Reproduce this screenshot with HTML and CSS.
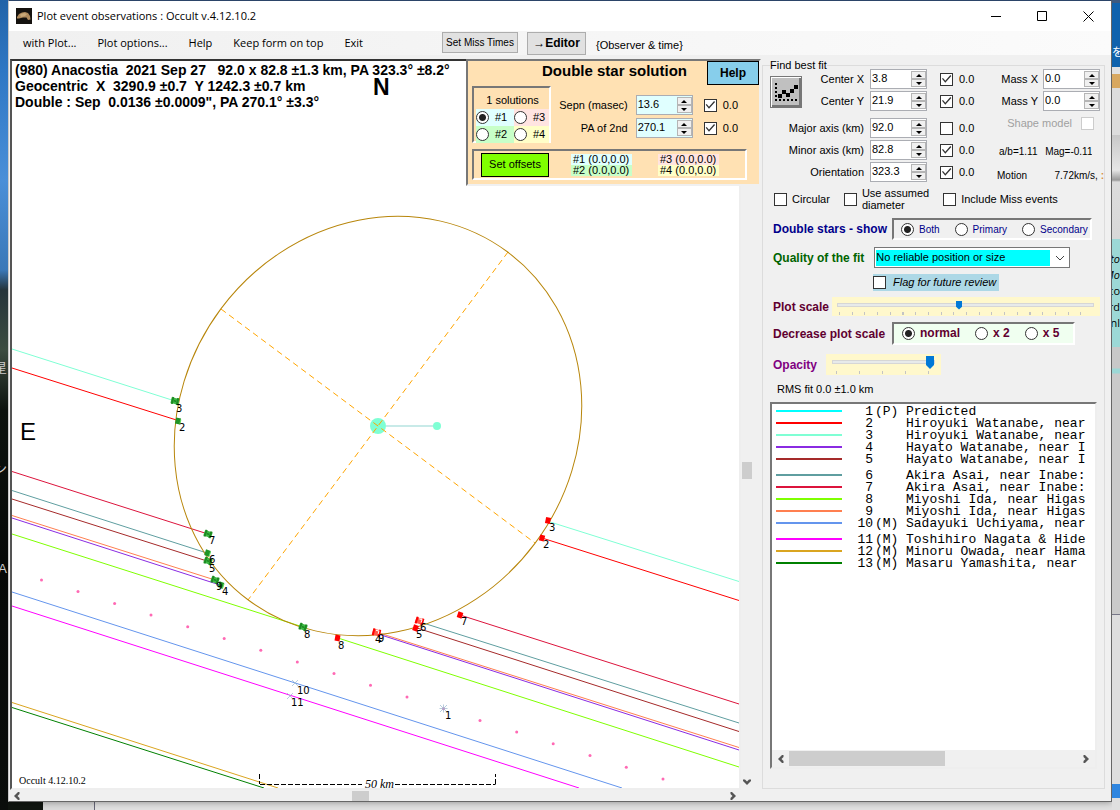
FILE: index.html
```html
<!DOCTYPE html>
<html lang="en">
<head>
<meta charset="utf-8">
<title>Plot event observations : Occult v.4.12.10.2</title>
<link rel="stylesheet" href="styles.css">
</head>
<body>
<div class="desk-left"><span class="desk-star">星</span><span class="desk-n">ン</span><span class="desk-ha">HA</span></div>
<div class="window">
  <header class="titlebar">
    <svg class="app-icon" viewBox="0 0 16 16"><rect width="16" height="16" fill="#15120f"/><path d="M1 9L3 6 6 4.500 9 4 12 5 14 8 14.500 11.500 12 12 10.500 9.500 7 9.500 3 10.500 1 10.500z" fill="#b08a5c"/><path d="M4 6.500l4-1.500 3 1-2 2-4 1z" fill="#c9a878"/></svg>
    <h1>Plot event observations : Occult v.4.12.10.2</h1>
    <div class="caption">
      <button aria-label="Minimize"><svg viewBox="0 0 11 11"><path d="M0 5.500h10"/></svg></button>
      <button aria-label="Maximize"><svg viewBox="0 0 11 11"><path d="M.5.5h9v9h-9z"/></svg></button>
      <button aria-label="Close"><svg viewBox="0 0 11 11"><path d="M.5.5l10 10M10.500.5l-10 10"/></svg></button>
    </div>
  </header>
  <nav class="menubar">
    <div class="menus">
      <button>with Plot...</button><button>Plot options...</button><button>Help</button><button>Keep form on top</button><button>Exit</button>
    </div>
    <button class="btn miss">Set Miss Times</button>
    <button class="btn editor">→Editor</button>
    <span class="hint">{Observer &amp; time}</span>
  </nav>
  <main class="main">
    <section class="plot-area">
      <div class="plot">
        <svg class="chart" viewBox="12 61 727 727" preserveAspectRatio="xMinYMin meet">
          <defs>
            <g id="gm"><rect x="-4" y="-3" width="8" height="6" fill="#3cb843"/><path d="M-2.500-3.500v7M2.500-3.500v7" stroke="#1d8a22" stroke-width="2"/><path d="M-1 0h2" stroke="#0c6b10"/></g>
            <g id="gs"><rect x="-2.500" y="-3" width="5" height="6" fill="#1f9426"/><path d="M2.500-2v5" stroke="#5fdc5f"/></g>
            <g id="rm"><rect x="-4" y="-3" width="8" height="6" fill="#ff5a4a"/><path d="M-3-3.500v7M3-3.500v7" stroke="#f00" stroke-width="2"/><path d="M-1-2h3v3" stroke="#fff" fill="none"/></g>
            <g id="rs"><rect x="-2.500" y="-3" width="5" height="6" fill="#f00"/></g>
          </defs>
          <g class="chords">
            <path stroke="#7fffd4" d="M12 349L175 401M547 521L739 581.500"/>
            <path stroke="#ff0000" d="M12 368L178 420.500M542 538L739 600.500"/>
            <path stroke="#dc143c" d="M12 471.500L208 534M460 615L739 704"/>
            <path stroke="#5f9ea0" d="M12 490.500L207 553M420 622L739 723"/>
            <path stroke="#a52a2a" d="M12 499L207 561M417 628L739 731.500"/>
            <path stroke="#ff7f50" d="M12 515.500L215 580M376 632L739 747.500"/>
            <path stroke="#8a2be2" d="M12 518L220 585M378 634L739 750"/>
            <path stroke="#7fff00" d="M12 534L303 627M338 638L739 767"/>
            <path stroke="#6495ed" d="M12 592L622 788"/>
            <path stroke="#ff00ff" d="M12 606L579 788"/>
            <path stroke="#daa520" d="M12 702.500L278 788"/>
            <path stroke="#008000" d="M12 707.500L264 788"/>
          </g>
          <g fill="#ff69b4">
            <circle cx="41.500" cy="580" r="1.500"/><circle cx="78" cy="591.500" r="1.500"/><circle cx="114.600" cy="603.400" r="1.500"/><circle cx="151" cy="615" r="1.500"/><circle cx="187.700" cy="626.800" r="1.500"/><circle cx="224.200" cy="638.500" r="1.500"/><circle cx="260.800" cy="650.200" r="1.500"/><circle cx="297.300" cy="662" r="1.500"/><circle cx="334" cy="673.600" r="1.500"/><circle cx="370.500" cy="685.300" r="1.500"/><circle cx="407" cy="697" r="1.500"/><circle cx="443.500" cy="708.700" r="1.500"/><circle cx="480" cy="720.400" r="1.500"/><circle cx="516.700" cy="732" r="1.500"/><circle cx="553.200" cy="743.800" r="1.500"/><circle cx="590" cy="755.500" r="1.500"/><circle cx="626.300" cy="767.200" r="1.500"/><circle cx="663" cy="779" r="1.500"/>
          </g>
          <path class="star" d="M443.500 704.500v8M439.500 708.500h8M440 705l7 7M447 705l-7 7M292 680l6 6M298 680l-6 6M287 693l6 6M293 693l-6 6"/>
          <circle cx="378" cy="426" r="8" fill="#7fffd4"/><path d="M386 426h48" stroke="#c8eae8" stroke-width="2"/><circle cx="437" cy="426" r="4" fill="#7fffd4"/>
          <path class="axes" d="M508 252L248 600M221 309L535 543"/>
          <ellipse class="limb" cx="378" cy="426" rx="217" ry="196" transform="rotate(-53.300 378 426)"/>
          <use href="#gm" transform="translate(175 401) rotate(12)"/><use href="#gs" transform="translate(178 421) rotate(12)"/>
          <use href="#gm" transform="translate(208 534) rotate(18)"/><use href="#gs" transform="translate(207.500 553) rotate(18)"/><use href="#gm" transform="translate(208 561) rotate(18)"/>
          <use href="#gm" transform="translate(215 580) rotate(18)"/><use href="#gs" transform="translate(221 585) rotate(18)"/><use href="#gm" transform="translate(303 627) rotate(18)"/>
          <use href="#rs" transform="translate(548 520.500) rotate(12)"/><use href="#rs" transform="translate(542 538) rotate(16)"/>
          <use href="#rs" transform="translate(460 615) rotate(18)"/><use href="#rm" transform="translate(419.500 621) rotate(18)"/><use href="#rs" transform="translate(415.500 628) rotate(18)"/>
          <use href="#rm" transform="translate(376.500 632.500) rotate(14)"/><use href="#rs" transform="translate(337.500 638) rotate(10)"/>
          <g class="num">
            <text x="176" y="412">3</text><text x="179" y="431">2</text><text x="209" y="544">7</text><text x="209" y="563">6</text><text x="209" y="572">5</text><text x="216" y="590">9</text><text x="222" y="595">4</text><text x="304" y="638">8</text><text x="338" y="649">8</text><text x="375" y="643">4</text><text x="378" y="642">9</text><text x="416" y="638">5</text><text x="420" y="631">6</text><text x="461" y="625">7</text><text x="543" y="548">2</text><text x="549" y="531">3</text><text x="445" y="719">1</text><text x="297" y="694">10</text><text x="291" y="706">11</text>
          </g>
          <path class="scale" d="M259.500 774v10M260 784.500H362M395 784.500H495.500M495.500 784v-10"/>
          <text class="scale-text" x="365" y="788">50 km</text>
          <text class="version" x="19" y="784">Occult 4.12.10.2</text>
          <text class="north" x="373" y="95">N</text><text class="east" x="20" y="440">E</text>
          <g class="facts"><text x="15" y="75">(980) Anacostia&#160; 2021 Sep 27&#160;&#160; 92.0 x 82.8 ±1.3 km, PA 323.3° ±8.2°</text><text x="15" y="91">Geocentric&#160; X&#160; 3290.9 ±0.7&#160; Y 1242.3 ±0.7 km</text><text x="15" y="107">Double : Sep&#160; 0.0136 ±0.0009", PA 270.1° ±3.3°</text></g>
        </svg>
      </div>
      <div class="vscroll"><i class="vthumb"></i><svg viewBox="0 0 8 6"><path d="M0 .5h2l2 2 2-2h2v1.500L4 6 0 2z"/></svg></div>
      <div class="hscroll"><svg viewBox="0 0 6 8"><path d="M5.500 0H4L0 4l4 4h1.500V6l-2-2 2-2z"/></svg><i class="hthumb"></i><svg viewBox="0 0 6 8"><path d="M.5 0H2l4 4-4 4H.5V6l2-2-2-2z"/></svg></div>
    </section>

    <section class="double-star">
      <div class="ds-head"><h2>Double star solution</h2><button class="btn help">Help</button></div>
      <div class="ds-body">
        <div class="sunken solutions">
          <span class="sol-count">1 solutions</span>
          <label class="c1"><input type="radio" name="sol" checked>#1</label><label class="c3"><input type="radio" name="sol">#3</label>
          <label class="c2"><input type="radio" name="sol">#2</label><label class="c4"><input type="radio" name="sol">#4</label>
        </div>
        <div class="ds-fields">
          <label for="sepn">Sepn (masec)</label>
          <div class="spin cyan"><input id="sepn" value="13.6"><span><button aria-label="Up"></button><button aria-label="Down" class="dn"></button></span></div>
          <label class="chk"><input type="checkbox" checked>0.0</label>
          <label for="pa2">PA of 2nd</label>
          <div class="spin cyan"><input id="pa2" value="270.1"><span><button aria-label="Up"></button><button aria-label="Down" class="dn"></button></span></div>
          <label class="chk"><input type="checkbox" checked>0.0</label>
        </div>
      </div>
      <div class="sunken offsets">
        <button class="btn set">Set offsets</button>
        <div class="off"><span class="c1">#1 (0.0,0.0)</span><span class="c2">#2 (0.0,0.0)</span></div>
        <div class="off"><span class="c3">#3 (0.0,0.0)</span><span class="c4">#4 (0.0,0.0)</span></div>
      </div>
    </section>

    <fieldset class="panel">
      <legend>Find best fit</legend>
      <div class="fit">
        <button class="fit-btn" aria-label="Fit"><svg viewBox="0 0 26 26"><path d="M2 4h2v2H2zM2 8h2v2H2zM2 12h2v2H2zM2 16h2v2H2zM2 20h2v2H2zM6 20h2v2H6zM10 20h2v2h-2zM14 20h2v2h-2zM18 20h2v2h-2zM22 20h2v2h-2z"/><path d="M5 15h4v4H5zM9 11h4v4H9zM13 14h4v4h-4zM17 10h4v4h-4zM21 6h4v4h-4z"/><path d="M7 17l4-4 4 3 8-8" stroke="#000" fill="none"/></svg></button>
        <div class="fields">
          <label for="cx">Center X</label><div class="spin"><input id="cx" value="3.8"><span><button aria-label="Up"></button><button aria-label="Down" class="dn"></button></span></div><label class="chk"><input type="checkbox" checked>0.0</label>
          <label for="cy">Center Y</label><div class="spin"><input id="cy" value="21.9"><span><button aria-label="Up"></button><button aria-label="Down" class="dn"></button></span></div><label class="chk"><input type="checkbox" checked>0.0</label>
          <i class="spacer"></i>
          <label for="maj">Major axis (km)</label><div class="spin"><input id="maj" value="92.0"><span><button aria-label="Up"></button><button aria-label="Down" class="dn"></button></span></div><label class="chk"><input type="checkbox">0.0</label>
          <label for="min">Minor axis (km)</label><div class="spin"><input id="min" value="82.8"><span><button aria-label="Up"></button><button aria-label="Down" class="dn"></button></span></div><label class="chk"><input type="checkbox" checked>0.0</label>
          <label for="ori">Orientation</label><div class="spin"><input id="ori" value="323.3"><span><button aria-label="Up"></button><button aria-label="Down" class="dn"></button></span></div><label class="chk"><input type="checkbox" checked>0.0</label>
        </div>
        <div class="mass">
          <div class="mrow"><label for="mx">Mass X</label><div class="spin"><input id="mx" value="0.0"><span><button aria-label="Up"></button><button aria-label="Down" class="dn"></button></span></div></div>
          <div class="mrow"><label for="my">Mass Y</label><div class="spin"><input id="my" value="0.0"><span><button aria-label="Up"></button><button aria-label="Down" class="dn"></button></span></div></div>
          <label class="shape">Shape model<input type="checkbox" disabled></label>
          <div class="ratio"><span>a/b=1.11</span><span class="mag">Mag=-0.11</span></div>
          <div class="motion"><span>Motion</span><span>7.72km/s, <b>:</b></span></div>
        </div>
      </div>
      <div class="checks">
        <label><input type="checkbox">Circular</label>
        <label class="two"><input type="checkbox"><span>Use assumed<br>diameter</span></label>
        <label><input type="checkbox">Include Miss events</label>
      </div>
      <div class="row show"><strong>Double stars - show</strong>
        <div class="sunken radios small"><label><input type="radio" name="show" checked>Both</label><label><input type="radio" name="show">Primary</label><label><input type="radio" name="show">Secondary</label></div>
      </div>
      <div class="row quality"><label class="bold" for="q">Quality of the fit</label>
        <div class="combo"><select id="q"><option>No reliable position or size</option></select><svg viewBox="0 0 10 6"><path d="M1 1l4 4 4-4" fill="none" stroke="#444"/></svg></div>
      </div>
      <label class="flag"><input type="checkbox">Flag for future review</label>
      <div class="row plotscale"><label class="bold" for="ps">Plot scale</label><div class="slider"><input id="ps" type="range" min="0" max="1000" value="474"><i class="ticks"></i></div></div>
      <div class="row decrease"><strong>Decrease plot scale</strong>
        <div class="sunken radios big"><label><input type="radio" name="dec" checked>normal</label><label><input type="radio" name="dec">x 2</label><label><input type="radio" name="dec">x 5</label></div>
      </div>
      <div class="row opacity"><label class="bold" for="op">Opacity</label><div class="slider"><input id="op" type="range" value="100"><i class="ticks"></i></div></div>
      <p class="rms">RMS fit 0.0 ±1.0 km</p>
      <div class="list">
        <ol>
          <li style="--c:#00ffff"><i></i><span>1</span><span>(P)</span><span>Predicted</span></li>
          <li style="--c:#ff0000"><i></i><span>2</span><span></span><span>Hiroyuki Watanabe, near</span></li>
          <li style="--c:#7fffd4"><i></i><span>3</span><span></span><span>Hiroyuki Watanabe, near</span></li>
          <li style="--c:#8a2be2"><i></i><span>4</span><span></span><span>Hayato Watanabe, near I</span></li>
          <li style="--c:#a52a2a"><i></i><span>5</span><span></span><span>Hayato Watanabe, near I</span></li>
        </ol>
        <ol>
          <li style="--c:#5f9ea0"><i></i><span>6</span><span></span><span>Akira Asai, near Inabe:</span></li>
          <li style="--c:#dc143c"><i></i><span>7</span><span></span><span>Akira Asai, near Inabe:</span></li>
          <li style="--c:#7fff00"><i></i><span>8</span><span></span><span>Miyoshi Ida, near Higas</span></li>
          <li style="--c:#ff7f50"><i></i><span>9</span><span></span><span>Miyoshi Ida, near Higas</span></li>
          <li style="--c:#6495ed"><i></i><span>10</span><span>(M)</span><span>Sadayuki Uchiyama, near</span></li>
        </ol>
        <ol>
          <li style="--c:#ff00ff"><i></i><span>11</span><span>(M)</span><span>Toshihiro Nagata &amp; Hide</span></li>
          <li style="--c:#daa520"><i></i><span>12</span><span>(M)</span><span>Minoru Owada, near Hama</span></li>
          <li style="--c:#008000"><i></i><span>13</span><span>(M)</span><span>Masaru Yamashita, near</span></li>
        </ol>
        <div class="lscroll"><svg viewBox="0 0 6 8"><path d="M5.500 0H4L0 4l4 4h1.500V6l-2-2 2-2z"/></svg><i></i><svg viewBox="0 0 6 8"><path d="M.5 0H2l4 4-4 4H.5V6l2-2-2-2z"/></svg></div>
      </div>
    </fieldset>
  </main>
</div>
<div class="desk-right"><span class="wo">を</span><div class="snips"><em>to</em><em>Mo</em><span>co</span><span>rd</span><span>onl</span></div></div>
</body>
</html>
```
FILE: styles.css
```css
* { box-sizing: border-box; }
html, body { height: 100%; }
body {
  margin: 0;
  display: grid;
  grid-template-columns: 8px minmax(0, 1fr) 8px;
  overflow: hidden;
  font: 11px/13px "Liberation Sans", Arial, sans-serif;
  color: #000;
  background: linear-gradient(90deg, #101510 43px, #dadada 43px, #dadada 94px, #667 94px, #667 95px, #e0e0e0 95px);
}
button, input, select { font: inherit; color: inherit; margin: 0; }
button { padding: 0; }
h1, h2, p, ol { margin: 0; padding: 0; }

.desk-left {
  position: relative;
  overflow: hidden;
  color: #ccc;
  font: 13px/16px "Liberation Sans", "Noto Sans CJK JP", sans-serif;
  background: linear-gradient(#2263a8, #2e77c4 70px, #4a8fd8 180px, #3a78b8 270px, #25343a 290px, #3c4c40 350px, #0c120e 410px, #060807 560px, #0a0d0b);
}
.desk-left span { position: absolute; right: 1px; }
.desk-star { top: 360px; }
.desk-n { top: 461px; }
.desk-ha { top: 561px; }

.desk-right {
  position: relative;
  overflow: hidden;
  font: 11px/13px "Open Sans", sans-serif;
  background: linear-gradient(#3c5a80 3px, #0f62ad 3px, #0f62ad 67px, #e2e2e2 67px, #e2e2e2 74px, #d8a860 74px, #d8a860 88px, #ddd 88px, #ddd 135px, #c8c8c8 135px, #e6e6e6 170px, #999 180px, #dcdcdc 182px, #d8d8d8 239px, #9cd8d6 239px, #9cd8d6 347px, #c8c8c8 347px, #c8c8c8 368px, #9cd8d6 369px, #9cd8d6 373px, #cacaca 374px, #cacaca 614px, #778 614px, #778 615px, #dedede 615px, #dedede 784px, #2f86e0 784px, #2f86e0 798px, #e0e0e0 798px);
}
.wo { position: absolute; top: 45px; left: 0; color: #fff; font-family: "Noto Sans CJK JP", sans-serif; }
.snips { position: absolute; top: 252px; right: 0; display: grid; grid-auto-rows: 13px; row-gap: 3px; justify-items: end; }

.window {
  display: flex;
  flex-direction: column;
  min-width: 0;
  margin: 0 0 8px;
  background: #f0f0f0;
  border: 1px solid #666;
  border-top: 1px solid #2b4468;
  border-left-color: #c8c8c8;
  box-shadow: 0 0 7px #0006;
}
.titlebar { display: flex; align-items: center; height: 30px; background: #fff; padding-left: 7px; gap: 5px; }
.titlebar h1 { flex: 1; font: 11px/16px "Open Sans", sans-serif; }
.app-icon { width: 16px; height: 16px; }
.caption { display: flex; }
.caption button { width: 46px; height: 28px; border: 0; background: none; display: grid; place-items: center; }
.caption svg { width: 11px; height: 11px; fill: none; stroke: #000; }

.menubar { display: flex; align-items: flex-start; height: 24px; padding-left: 14px; background: linear-gradient(90deg, #f0f0f0, #fbfbfb); }
.menus { display: flex; gap: 21px; width: 419px; }
.menus button { border: 0; background: none; font: 11px/24px "Open Sans", sans-serif; }
.btn { border: 1px solid #adadad; background: #e1e1e1; }
.miss { font-size: 10px; width: 76px; height: 21px; margin-top: 1px; }
.editor { font-size: 12px; font-weight: bold; width: 59px; height: 23px; margin: 1px 10px 0 9px; }
.hint { line-height: 13px; margin-top: 8px; }

.main { flex: 1; min-height: 0; position: relative; display: flex; gap: 8px; padding: 4px 6px 0 1px; }
.plot-area { flex: 1; min-width: 0; display: grid; grid-template: minmax(0, 1fr) 10px / minmax(0, 1fr) 12px; gap: 1px; }
.plot { background: #fff; border: 2px solid; border-color: #333 #eee #eee #555; }
.chart { display: block; width: 100%; height: 100%; }
.chords path { fill: none; stroke-width: 1; }
.star { stroke: #9ab8d0; stroke-width: 1; opacity: .7; }
.axes { fill: none; stroke: #ffa500; stroke-dasharray: 6 4; }
.limb { fill: none; stroke: #b8860b; }
.num { font: 10px "DejaVu Sans", sans-serif; }
.scale { fill: none; stroke: #000; stroke-dasharray: 5 2; }
.scale-text { font: italic 12px "Liberation Serif", serif; }
.version { font: 10px "Liberation Serif", serif; }
.north { font: bold 23px "Liberation Sans", sans-serif; }
.east { font: 24px "Liberation Sans", sans-serif; }
.facts { font: bold 14px "Liberation Sans", sans-serif; }

.vscroll { display: flex; flex-direction: column; align-items: center; justify-content: flex-end; padding: 0 2px 5px 0; }
.vscroll svg { width: 8px; height: 6px; fill: #555; }
.vthumb { width: 10px; height: 17px; background: #cdcdcd; margin-bottom: 300px; }
.hscroll { display: flex; align-items: center; padding: 0 5px 0 4px; }
.hscroll svg { width: 6px; height: 8px; fill: #555; }
.hthumb { width: 17px; height: 10px; background: #cdcdcd; margin: 0 auto 0 46%; }

.sunken { border: 2px solid; border-color: #777 #fff #fff #777; }
.c1 { background: #e0ffff; }
.c2 { background: #c8ffc8; }
.c3 { background: #ffe4e1; }
.c4 { background: #ffffc8; }

.double-star {
  position: absolute;
  left: 457px;
  top: 4px;
  width: 295px;
  height: 127px;
  padding: 0 0 0 4px;
  background: #ffe1b3;
  border: 2px solid;
  border-color: #777 #f0f0f0 #f0f0f0 #777;
}
.ds-head { display: flex; justify-content: flex-end; gap: 20px; height: 25px; }
.ds-head h2 { font-size: 15px; line-height: 19px; }
.help { width: 52px; height: 24px; font-size: 12px; font-weight: bold; background: #87ceeb; border-color: #000; }
.ds-body { display: flex; justify-content: space-between; padding-right: 21px; }
.solutions { display: grid; grid-template-columns: 38px 1fr; width: 79px; height: 57px; padding-left: 2px; }
.sol-count { grid-column: span 2; text-align: center; line-height: 18px; padding-top: 3px; }
.solutions label { display: flex; align-items: center; gap: 6px; height: 17px; }
.ds-fields { display: grid; grid-template-columns: auto 57px auto; column-gap: 8px; row-gap: 3px; justify-items: end; align-content: start; align-items: center; padding-top: 9px; }
.ds-fields .chk { padding-left: 3px; }
.offsets { display: flex; align-items: center; width: 275px; height: 31px; margin-top: 6px; padding-left: 7px; }
.set { width: 68px; height: 24px; background: #80ff00; border-color: #000; margin-right: 22px; }
.off { display: grid; grid-auto-rows: 11px; width: 61px; line-height: 11px; margin-right: 26px; }
.off span { padding-left: 2px; white-space: nowrap; }

input[type="radio"] { appearance: none; width: 13px; height: 13px; border: 1px solid #333; border-radius: 50%; background: #fff; flex: none; }
input[type="radio"]:checked { background: radial-gradient(circle, #222 3px, #fff 4px); }
input[type="checkbox"] { appearance: none; display: grid; width: 13px; height: 13px; border: 1px solid #333; background: #fff; flex: none; }
input[type="checkbox"]:checked::before { content: ""; background: #333; clip-path: polygon(9% 48%, 18% 42%, 39% 66%, 85% 14%, 94% 22%, 39% 85%); }
input[type="checkbox"]:disabled { border-color: #ccc; }
.chk { display: flex; align-items: center; gap: 6px; }

.spin { display: flex; width: 57px; height: 20px; border: 1px solid #abadb3; background: #fff; padding: 1px 0; }
.spin input { flex: 1; min-width: 0; border: 0; padding: 0 0 2px 1px; background: transparent; font-size: 11px; }
.spin span { display: grid; grid-template-rows: 8px 8px; width: 15px; }
.spin button { border: 1px solid #b5b5b5; background: #f0f0f0; display: grid; place-items: center; }
.spin button::before { content: ""; border: 3px solid transparent; border-top: 0; border-bottom-color: #000; }
.spin .dn::before { border: 3px solid transparent; border-bottom: 0; border-top-color: #000; }
.cyan { background: #e0ffff; }

.panel { flex: none; width: 343px; min-width: 0; margin: 0 0 12px; padding: 0 4px 19px 7px; border: 1px solid #dcdcdc; display: flex; flex-direction: column; }
.panel legend { padding: 0; line-height: 13px; margin-bottom: -3px; }
.fit { display: flex; }
.fit-btn { width: 32px; height: 32px; margin-top: 7px; border: 1px solid #777; background: #c0c0c0; box-shadow: inset 1px 1px #fff, inset -2px -2px #777; padding: 2px; }
.fit-btn svg { display: block; width: 26px; height: 26px; }
.fields { flex: 1; display: grid; grid-template-columns: 62px 57px auto; column-gap: 6px; row-gap: 2px; align-items: center; }
.fields label:not(.chk) { justify-self: end; white-space: nowrap; }
.fields .chk { padding-left: 7px; }
.spacer { grid-column: span 3; height: 3px; }
.mass { width: 106px; display: flex; flex-direction: column; gap: 2px; }
.mrow { display: flex; align-items: center; justify-content: flex-end; gap: 5px; }
.shape { display: flex; align-items: center; justify-content: flex-end; gap: 9px; color: #a0a0a0; padding: 4px 6px 0 0; }
.ratio { display: flex; gap: 3px; padding: 13px 0 0 5px; font-size: 10px; }
.mag { width: 52px; overflow: hidden; white-space: nowrap; display: flex; justify-content: flex-end; }
.motion { display: flex; justify-content: space-between; padding: 9px 0 0 3px; font-size: 10px; white-space: nowrap; margin-right: -4px; }
.motion b { color: #d89040; }

.checks { display: flex; align-items: center; height: 24px; gap: 14px; padding-left: 4px; margin-top: 5px; }
.checks label { display: flex; align-items: center; gap: 5px; white-space: nowrap; }
.checks .two { line-height: 12px; }
.row { display: flex; align-items: center; padding-left: 3px; }
.row strong, .bold { font-weight: bold; font-size: 12px; line-height: 14px; white-space: nowrap; }
.radios { display: flex; align-items: center; margin-left: auto; }
.radios label { display: flex; align-items: center; }
.show { height: 22px; margin-top: 7px; padding-right: 8px; color: #00008b; }
.small { width: 200px; height: 22px; padding-left: 7px; gap: 15px; font-size: 10px; }
.small label { gap: 5px; }
.quality { margin-top: 7px; gap: 10px; color: #006400; }
.combo { display: flex; align-items: center; justify-content: space-between; width: 197px; height: 21px; margin: 0 30px 0 auto; border: 1px solid #777; background: #fff; color: #000; padding: 2px 4px 2px 1px; }
.combo select { appearance: none; width: 174px; height: 16px; border: 0; border-radius: 0; background: #0ff; padding: 0; }
.combo svg { width: 10px; height: 6px; }
.flag { display: flex; align-items: center; gap: 7px; width: 126px; height: 17px; margin: 6px 0 0 103px; background: #add8e6; font-style: italic; white-space: nowrap; }
.plotscale { margin-top: 6px; color: #600030; justify-content: space-between; }
.slider { background: #fff8cc; }
.slider input { appearance: none; display: block; background: none; }
.slider input::-webkit-slider-runnable-track { height: 4px; background: #e7eaea; border: 1px solid #d6d6d6; }
.slider input::-webkit-slider-thumb { appearance: none; background: #0078d7; clip-path: polygon(0 0, 100% 0, 100% 70%, 50% 100%, 0 70%); }
.ticks { display: block; height: 3px; background: repeating-linear-gradient(90deg, #c4c4c4 0 1px, transparent 1px var(--step)); }
.plotscale .slider { width: 268px; height: 19px; padding: 2px 6px 0 5px; }
.plotscale input { width: 100%; height: 11px; }
.plotscale input::-webkit-slider-thumb { width: 6px; height: 9px; margin-top: -3px; }
.plotscale .ticks { --step: 5%; margin: 2px 1px 0 2px; }
.decrease { margin-top: 6px; padding-right: 25px; color: #600030; }
.big { width: 183px; height: 23px; padding-left: 8px; gap: 15px; background: #f0fff0; font-size: 12px; font-weight: bold; }
.big label { gap: 5px; }
.opacity { margin-top: 9px; gap: 9px; color: #800080; }
.opacity .slider { width: 115px; height: 21px; padding: 1px 6px 0; }
.opacity input { width: 100%; height: 14px; }
.opacity input::-webkit-slider-thumb { width: 8px; height: 13px; margin-top: -5px; }
.opacity .ticks { --step: 23px; margin: 2px 4px 0; }
.rms { margin: 8px 0 6px 7px; }

.list { flex: 1; min-height: 0; display: flex; flex-direction: column; gap: 4px; margin-right: 3px; padding-top: 2px; background: #fff; border: 2px solid; border-color: #777 #eee #eee #777; overflow: hidden; font: 13px/12px "Liberation Mono", monospace; }
.list ol { list-style: none; }
.list li { display: grid; grid-template-columns: 66px 29px 24px 1fr; column-gap: 2px; height: 12px; padding-left: 4px; white-space: nowrap; }
.list li > i { height: 2px; margin-top: 4px; background: var(--c); }
.list li span:nth-of-type(1) { text-align: right; }
.list li span:nth-of-type(3) { padding-left: 5px; }
.lscroll { display: flex; align-items: center; height: 17px; margin-top: auto; padding: 0 6px; background: #f0f0f0; }
.lscroll svg { width: 6px; height: 8px; fill: #555; flex: none; }
.lscroll i { width: 50%; height: 15px; margin: 0 auto 0 5px; background: #cdcdcd; }
```
